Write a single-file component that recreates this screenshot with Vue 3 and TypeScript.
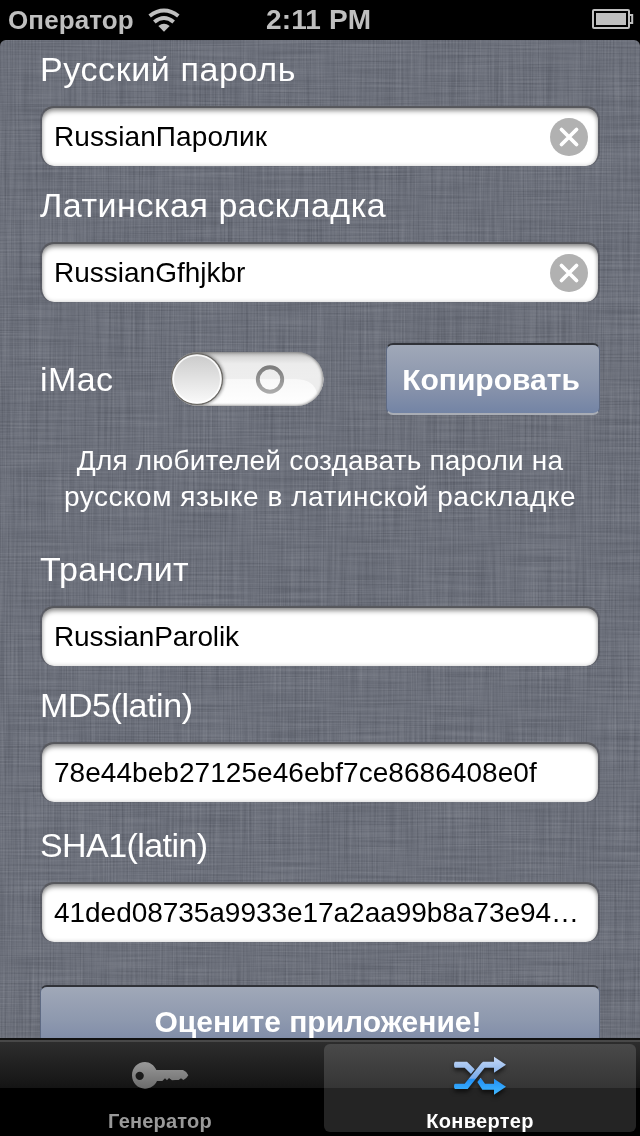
<script setup lang="ts">
import { ref } from 'vue'

interface Field {
  key: string
  label: string
  value: string
  clearable?: boolean
}

const passwords = ref<Field[]>([
  { key: 'ru', label: 'Русский пароль', value: 'RussianПаролик', clearable: true },
  { key: 'lat', label: 'Латинская раскладка', value: 'RussianGfhjkbr', clearable: true },
])

const hashes = ref<Field[]>([
  { key: 'translit', label: 'Транслит', value: 'RussianParolik' },
  { key: 'md5', label: 'MD5(latin)', value: '78e44beb27125e46ebf7ce8686408e0f' },
  { key: 'sha', label: 'SHA1(latin)', value: '41ded08735a9933e17a2aa99b8a73e94…' },
])
</script>

<template>
  <div class="screen">
    <header class="status">
      <span class="carrier">Оператор</span>
      <svg class="wifi" width="32" height="24" viewBox="0 0 96 72">
        <g fill="none" stroke="#bfbfbf" stroke-width="12">
          <path d="M5 24 Q48 -9 91 24" />
          <path d="M19 42 Q48 18 77 42" />
        </g>
        <path d="M31 54 Q48 40 65 54 L48 71 Z" fill="#bfbfbf" />
      </svg>
      <span class="time">2:11 PM</span>
      <svg class="battery" width="42" height="20" viewBox="0 0 42 20">
        <rect x="1" y="1" width="36" height="18" rx="1" fill="none" stroke="#bfbfbf" stroke-width="2" />
        <rect x="4" y="4" width="30" height="12" fill="#bfbfbf" />
        <path d="M38 6h2.2v8H38" fill="none" stroke="#bfbfbf" stroke-width="2" />
      </svg>
    </header>

    <main class="content">
      <svg class="linen" width="640" height="998">
        <filter id="weft" x="0" y="0" width="100%" height="100%" color-interpolation-filters="sRGB">
          <feTurbulence type="fractalNoise" baseFrequency="0.012 0.6" numOctaves="2" seed="4" />
          <feColorMatrix values="1 0 0 0 0  1 0 0 0 0  1 0 0 0 0  0 0 0 0 1" />
        </filter>
        <filter id="warp" x="0" y="0" width="100%" height="100%" color-interpolation-filters="sRGB">
          <feTurbulence type="fractalNoise" baseFrequency="0.6 0.012" numOctaves="2" seed="9" />
          <feColorMatrix values="1 0 0 0 0  1 0 0 0 0  1 0 0 0 0  0 0 0 0 1" />
        </filter>
        <rect width="640" height="998" fill="#6c707b" />
        <rect class="weave" width="640" height="998" filter="url(#weft)" />
        <rect class="weave" width="640" height="998" filter="url(#warp)" />
      </svg>

      <div class="form">
        <section v-for="f in passwords" :key="f.key" class="group" :class="f.key">
          <div class="label"><span>{{ f.label }}</span></div>
          <div class="field">
            <span class="value">{{ f.value }}</span>
            <svg v-if="f.clearable" class="clear" width="38" height="38" viewBox="0 0 38 38">
              <circle cx="19" cy="19" r="19" fill="#b1b1b1" />
              <path d="M11.5 11.5 26.5 26.5M26.5 11.5 11.5 26.5" stroke="#fff" stroke-width="3.8" stroke-linecap="round" />
            </svg>
          </div>
        </section>

        <div class="row">
          <span class="imac">iMac</span>
          <svg class="toggle" width="154" height="56" viewBox="0 0 154 56">
            <defs>
              <linearGradient id="knob" x1="0" y1="0" x2="0" y2="1">
                <stop offset="0" stop-color="#cacaca" />
                <stop offset="1" stop-color="#fbfbfb" />
              </linearGradient>
              <linearGradient id="track" x1="0" y1="0" x2="0" y2="1">
                <stop offset="0" stop-color="#b4b4b4" />
                <stop offset=".1" stop-color="#dadada" />
                <stop offset=".22" stop-color="#ececec" />
                <stop offset=".49" stop-color="#eeeeee" />
                <stop offset=".5" stop-color="#f8f8f8" />
                <stop offset="1" stop-color="#fff" />
              </linearGradient>
              <linearGradient id="ring" x1="0" y1="0" x2="0" y2="1">
                <stop offset="0" stop-color="#7d7d7d" />
                <stop offset="1" stop-color="#aaa" />
              </linearGradient>
              <clipPath id="trackClip"><rect x="1" y="1" width="152.500" height="54" rx="27" /></clipPath>
              <filter id="soft"><feGaussianBlur stdDeviation="1.6" /></filter>
            </defs>
            <rect x="1" y="1" width="152.500" height="54" rx="27" fill="url(#track)" />
            <path d="M126 28 Q145 29 147 43 L154 34 V26 Z" fill="#ededed" clip-path="url(#trackClip)" />
            <g clip-path="url(#trackClip)">
              <rect x="0" y="0" width="154" height="56" rx="27.5" fill="none" stroke="#666" stroke-width="2.4" filter="url(#soft)" />
              <circle cx="27.5" cy="28" r="27" fill="#555" opacity=".55" filter="url(#soft)" />
            </g>
            <circle cx="27" cy="28" r="25.4" fill="url(#knob)" stroke="#6b6965" stroke-width="1.3" />
            <circle cx="27" cy="28" r="23.8" fill="none" stroke="#fff" stroke-width="1.6" opacity=".85" />
            <circle cx="100" cy="28.5" r="12.2" fill="none" stroke="url(#ring)" stroke-width="3.9" />
          </svg>
          <button class="btn copy"><span>Копировать</span></button>
        </div>

        <p class="hint">
          <span class="h1">Для любителей создавать пароли на</span><br />
          <span class="h2">русском языке в латинской раскладке</span>
        </p>

        <section v-for="f in hashes" :key="f.key" class="group" :class="f.key">
          <div class="label"><span>{{ f.label }}</span></div>
          <div class="field"><span class="value">{{ f.value }}</span></div>
        </section>

        <button class="btn rate"><span>Оцените приложение!</span></button>
      </div>
    </main>

    <nav class="tabs">
      <div class="tab">
        <svg class="key" width="60" height="30" viewBox="390 270 180 90">
          <defs>
            <linearGradient id="keyFill" x1="0" y1="0" x2="0" y2="1">
              <stop offset="0" stop-color="#999" />
              <stop offset="1" stop-color="#6b6b6b" />
            </linearGradient>
          </defs>
          <path
            fill="url(#keyFill)" fill-rule="evenodd"
            d="M435 276C449 276 463 285 469 300H549Q560 304 565 316Q560 326 550 330L543 325 536 330H526L516 331 507 324 501 331 495 325 487 333H471C464 347 451 356 435 356C413 356 396 339 396 316C396 293 413 276 435 276ZM419 305A12.500 12.500 0 1 0 419 330A12.500 12.500 0 1 0 419 305Z"
          />
        </svg>
        <span class="tab-text gen">Генератор</span>
      </div>
      <div class="tab active">
        <svg class="shuffle" width="60" height="44" viewBox="396 256 180 132">
          <defs>
            <linearGradient id="upper" gradientUnits="userSpaceOnUse" x1="0" y1="262" x2="0" y2="375">
              <stop offset="0" stop-color="#c5d8f6" />
              <stop offset=".56" stop-color="#7aabea" />
              <stop offset=".6" stop-color="#2492f6" />
              <stop offset="1" stop-color="#40b8ff" />
            </linearGradient>
          </defs>
          <g fill="url(#upper)">
            <path d="M405 276H441L464 299 453 313 434 294H405Q402 293 402 285Q402 277 405 276Z" />
            <path d="M405 342H434L484 281 489 276H522V261L558 285 522 309V294H494L443 358H405Q402 357 402 350Q402 343 405 342Z" />
            <path d="M482 324 495 342H522V327L558 351 522 375V360H487L472 337Z" />
          </g>
        </svg>
        <span class="tab-text conv">Конвертер</span>
      </div>
    </nav>
  </div>
</template>

<style>
body {
  margin: 0;
  background: #000;
}
</style>

<style scoped>
.screen {
  width: 640px;
  height: 1136px;
  display: flex;
  flex-direction: column;
  overflow: hidden;
  background: #000;
  font-family: "Liberation Sans", Arial, sans-serif;
}
.status {
  position: relative;
  flex: none;
  height: 40px;
  box-sizing: border-box;
  display: flex;
  align-items: center;
  justify-content: space-between;
  padding: 0 6px 0 8px;
  color: #bfbfbf;
  font-weight: bold;
}
.carrier {
  font-size: 26px;
  width: 140px;
  letter-spacing: 0.1px;
  white-space: nowrap;
}
.wifi {
  margin-right: auto;
}
.time {
  position: absolute;
  left: 266px;
  top: 4px;
  font-size: 28px;
  line-height: 32px;
  letter-spacing: 0.15px;
  white-space: nowrap;
}
.battery {
  margin-top: -2px;
}
.content {
  position: relative;
  flex: none;
  height: 998px;
  overflow: hidden;
  border-radius: 6px 6px 0 0;
}
.linen {
  position: absolute;
  inset: 0;
}
.weave {
  mix-blend-mode: soft-light;
  opacity: 0.25;
}
.form {
  position: relative;
  padding: 9px 40px 0;
  display: flex;
  flex-direction: column;
}
.group {
  margin-bottom: 19px;
}
.label {
  height: 40px;
  line-height: 40px;
  font-size: 34px;
  color: #fff;
  white-space: nowrap;
}
.ru .label { letter-spacing: 0.6px; }
.lat .label { letter-spacing: 0.52px; }
.translit .label { letter-spacing: 0.25px; }
.md5 .label { letter-spacing: -0.42px; }
.sha .label { letter-spacing: -0.58px; }
.ru .value { letter-spacing: 0.1px; }
.translit .value { letter-spacing: -0.13px; }
.md5 .value { letter-spacing: 0.05px; }
.sha .value { letter-spacing: -0.04px; }
.field {
  margin-top: 17px;
  height: 60px;
  box-sizing: border-box;
  border: 2px solid #57585d;
  border-bottom: 0;
  border-left-color: rgba(70, 72, 78, 0.45);
  border-right-color: rgba(70, 72, 78, 0.45);
  border-radius: 14px;
  background: #fff padding-box;
  box-shadow: inset 0 4px 5px -1px rgba(0, 0, 0, 0.4), inset 0 0 4px rgba(0, 0, 0, 0.22);
  display: flex;
  align-items: center;
  justify-content: space-between;
  padding: 0 10px 0 12px;
  font-size: 28px;
  color: #000;
  white-space: nowrap;
}
.value {
  line-height: 58px;
}
.row {
  height: 72px;
  margin-top: 22px;
  display: flex;
  align-items: center;
}
.imac {
  width: 130px;
  font-size: 34px;
  line-height: 40px;
  letter-spacing: 0.4px;
  color: #fff;
}
.btn {
  box-sizing: border-box;
  height: 72px;
  padding: 2px 0 0;
  border: 1px solid #5e6a83;
  border-top: 2px solid #303238;
  border-bottom: 2px solid #a9adb5;
  border-radius: 7px;
  background: linear-gradient(#a0a8b8, #8d98ae 50%, #8490aa 70%, #7384a5);
  color: #fff;
  font: bold 30px/66px "Liberation Sans", Arial, sans-serif;
  white-space: nowrap;
  text-align: center;
}
.btn span {
  margin-left: -4px;
}
.copy {
  width: 214px;
  margin-left: auto;
}
.rate {
  width: 560px;
  margin-top: 24px;
}
.hint {
  margin: 28px -20px 34px;
  text-align: center;
  font-size: 28px;
  line-height: 36px;
  color: #fff;
  white-space: nowrap;
}
.h1 { letter-spacing: 0.19px; }
.h2 { letter-spacing: 0.53px; }
.md5 {
  margin-bottom: 23px;
}
.tabs {
  flex: none;
  height: 98px;
  box-sizing: border-box;
  display: flex;
  border-top: 2px solid #111;
  background: linear-gradient(#484848 0 2px, #2d2d2d 2px, #141414 48px, #000 48px);
}
.tab {
  width: 312px;
  height: 88px;
  margin: 4px;
  display: flex;
  flex-direction: column;
  align-items: center;
  border-radius: 6px;
}
.active {
  background: linear-gradient(#494949, #353535 44px, #242424 44px);
}
.key,
.shuffle {
  flex: none;
}
.key {
  margin-top: 16px;
}
.shuffle {
  margin: 11px 0 0 4px;
  filter: drop-shadow(0 3px 2px rgba(0, 0, 0, 0.6));
}
.tab-text {
  flex: none;
  font-size: 20px;
  font-weight: bold;
  line-height: 24px;
  color: #999;
}
.gen {
  margin-top: 19px;
  letter-spacing: 0.2px;
}
.conv {
  margin-top: 10px;
  letter-spacing: 0.3px;
  color: #fff;
}
</style>
